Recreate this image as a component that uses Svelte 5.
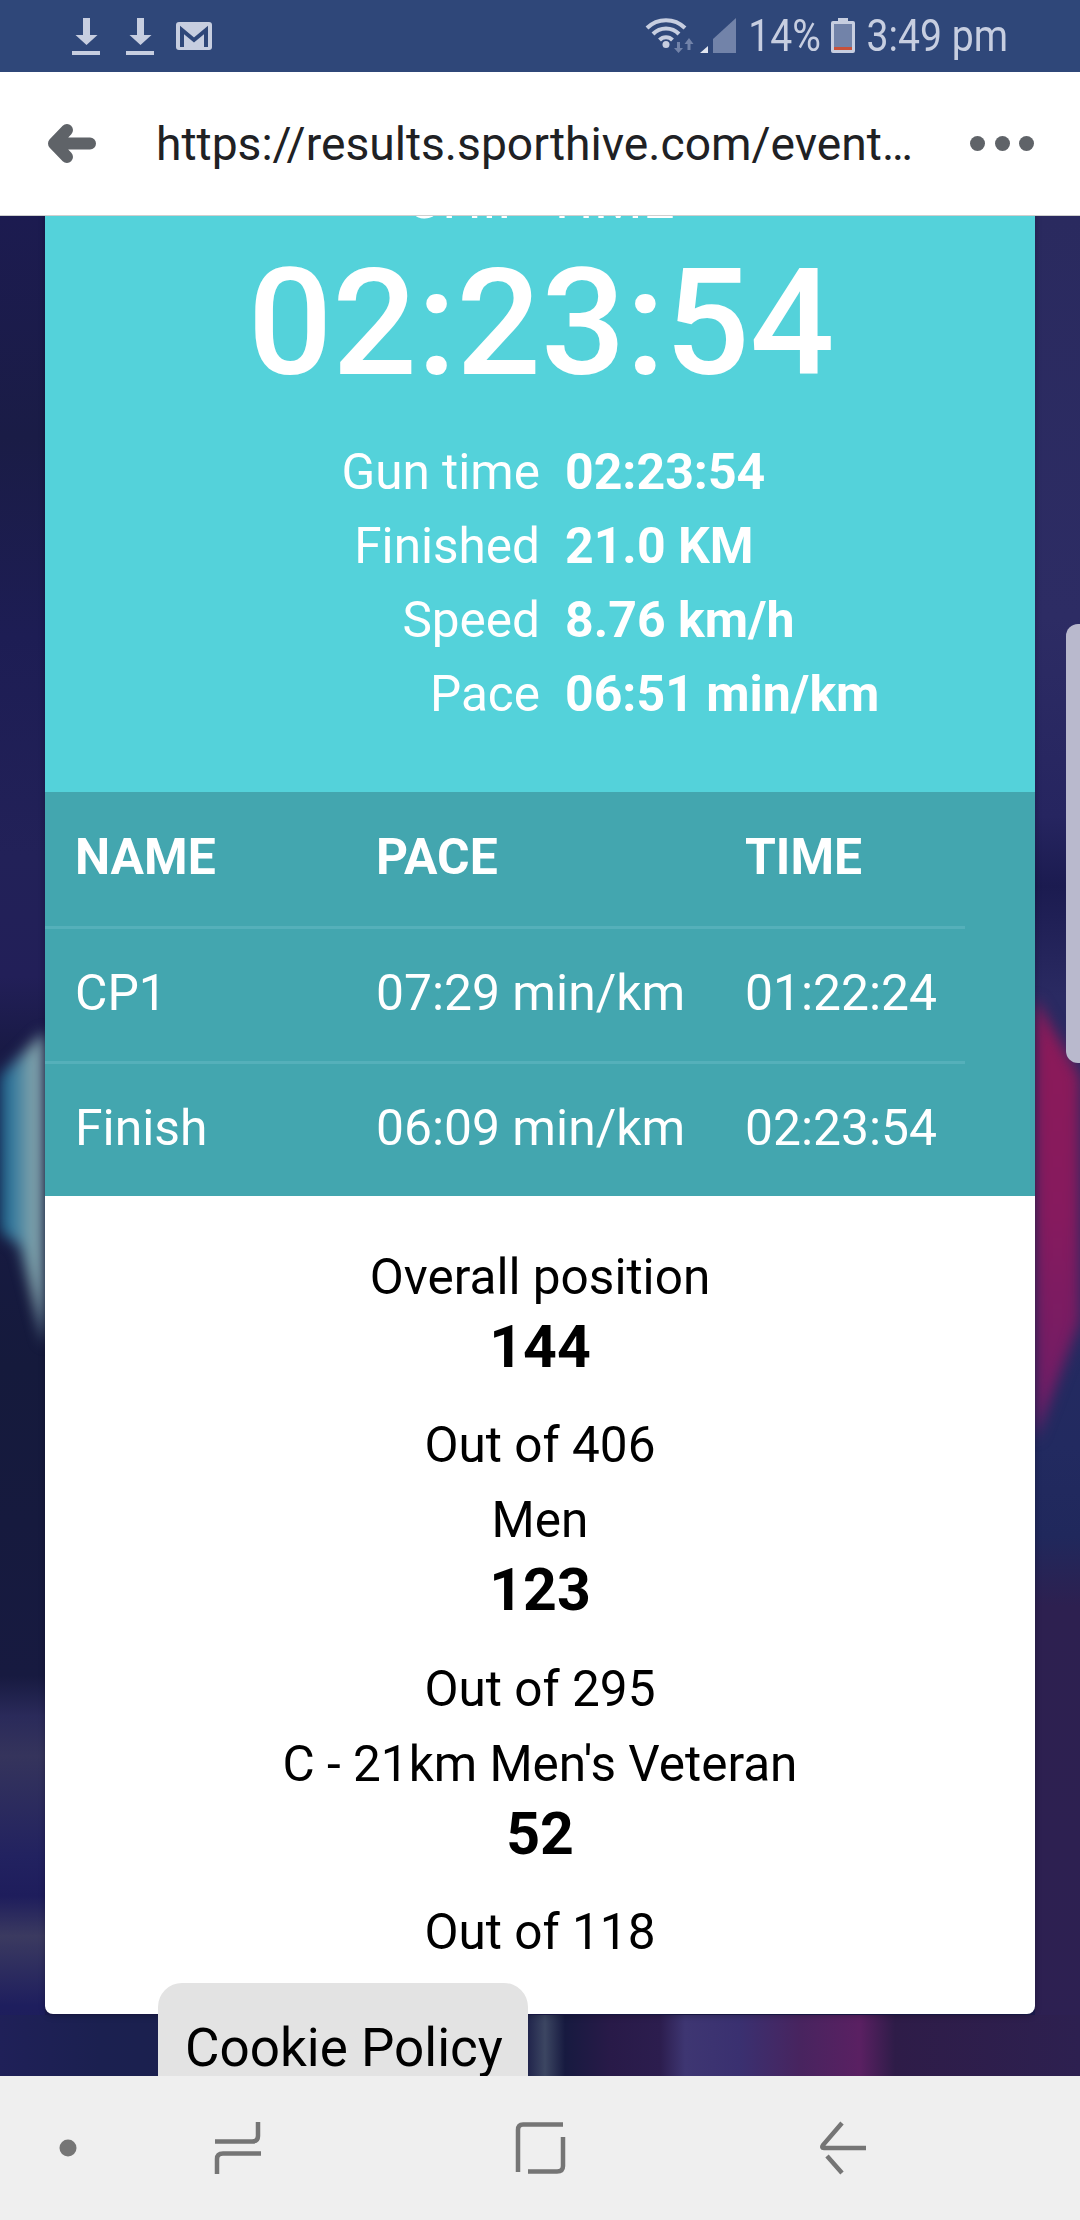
<script lang="ts">
  const stats = [
    { label: "Gun time", value: "02:23:54" },
    { label: "Finished", value: "21.0 KM" },
    { label: "Speed", value: "8.76 km/h" },
    { label: "Pace", value: "06:51 min/km" }
  ];
  const splits = [
    { name: "CP1", pace: "07:29 min/km", time: "01:22:24" },
    { name: "Finish", pace: "06:09 min/km", time: "02:23:54" }
  ];
  const positions = [
    { label: "Overall position", rank: 144, total: 406 },
    { label: "Men", rank: 123, total: 295 },
    { label: "C - 21km Men's Veteran", rank: 52, total: 118 }
  ];
</script>

<div class="phone">
  <div class="statusbar">
    <svg class="left-icons" width="140" height="72" viewBox="72 0 140 72">
      <path class="fill" d="M83 18h7v17h7.500l-11 10-11-10H83z" />
      <rect class="fill" x="72" y="51" width="28" height="4" />
      <path class="fill" d="M137 18h7v17h7.500l-11 10-11-10H137z" />
      <rect class="fill" x="126" y="51" width="28" height="4" />
      <rect class="fill" x="176" y="22" width="36" height="28" rx="3" />
      <path class="mail-m" d="M182 47V30l12 10 12-10v17" />
    </svg>
    <div class="right-icons">
      <svg width="92" height="72" viewBox="644 0 92 72">
        <path class="wifi" d="M646 28a27 27 0 0 1 38 0M652 34a18 18 0 0 1 26 0M658.500 40a9 9 0 0 1 13 0" />
        <circle class="fill" cx="665" cy="44.500" r="3.500" />
        <path class="dim" d="M676 42h3v6h3l-4.500 5-4.500-5h3zM686.500 50h3v-6h3l-4.500-6-4.500 6h3z" />
        <path class="bright" d="M699 53l8-7v7z" />
        <path class="dim" d="M712 53V39l23-21v35z" />
      </svg>
      <span class="status-text pct"><span>14%</span></span>
      <svg class="battery" width="24" height="35" viewBox="0 0 24 35">
        <path class="fill" d="M7 0h10v3h5a2 2 0 0 1 2 2v28a2 2 0 0 1-2 2H2a2 2 0 0 1-2-2V5a2 2 0 0 1 2-2h5z" />
        <rect class="dim" x="3" y="6" width="18" height="26" />
        <rect x="3" y="29" width="18" height="3" fill="#c8513a" />
      </svg>
      <span class="status-text clock"><span>3:49 pm</span></span>
    </div>
  </div>

  <header class="urlbar">
    <svg class="back" width="48" height="40" viewBox="48 125 48 40">
      <path d="M67 131L54 144.500 67 158M54 144.500H90" />
    </svg>
    <div class="url">https://results.sporthive.com/event…</div>
    <div class="dots">
      <span></span>
      <span></span>
      <span></span>
    </div>
  </header>

  <main class="content">
    <div class="backdrop">
      <div class="strip strip-left">
        <div class="blur"><div class="glow-teal"></div></div>
      </div>
      <div class="strip strip-right">
        <div class="blur"><div class="glow-magenta"></div></div>
      </div>
      <div class="strip-bottom"></div>
      <div class="scroll-handle"></div>
    </div>

    <section class="card">
      <div class="hero">
        <div class="hero-label">CHIP TIME</div>
        <div class="hero-time">02:23:54</div>
        <dl class="stats">
          {#each stats as s}
            <dt>{s.label}</dt>
            <dd>{s.value}</dd>
          {/each}
        </dl>
      </div>

      <div class="splits">
        <div class="row head">
          <div>NAME</div>
          <div>PACE</div>
          <div>TIME</div>
        </div>
        {#each splits as r}
          <div class="row">
            <div>{r.name}</div>
            <div>{r.pace}</div>
            <div>{r.time}</div>
          </div>
        {/each}
      </div>

      <div class="positions">
        {#each positions as p}
          <div class="position">
            <div class="line">{p.label}</div>
            <div class="rank">{p.rank}</div>
            <div class="line">Out of {p.total}</div>
          </div>
        {/each}
      </div>
    </section>

    <div class="cookie">Cookie Policy</div>
  </main>

  <nav class="navbar">
    <svg width="1080" height="144" viewBox="0 2076 1080 144">
      <circle cx="68" cy="2148" r="8.500" class="nav-dot" />
      <path d="M258 2122v14q0 5.500-6 5.500h-37M261 2153.500h-38q-6 0-6 5.500v15" />
      <path d="M563 2124.500h-40q-5 0-5 5.500v42M563 2137v29q0 5.500-6 5.500h-29" />
      <path d="M842 2123l-19 22q-2 3 1 3h42M827 2156l15 17" />
    </svg>
  </nav>
</div>

<style>
  :global(body) {
    margin: 0;
    font-family: Roboto, "Liberation Sans", sans-serif;
  }

  .phone {
    width: 1080px;
    height: 2220px;
    display: flex;
    flex-direction: column;
    overflow: hidden;
    background: #1b1b50;
  }

  .statusbar {
    height: 72px;
    flex: none;
    display: flex;
    align-items: center;
    justify-content: space-between;
    padding: 0 72px 0 72px;
    background: #2f4779;
  }

  .fill { fill: #c7cee0; }
  .dim { fill: #7283a9; }
  .bright { fill: #e2e6f0; }

  .mail-m {
    fill: none;
    stroke: #2f4779;
    stroke-width: 4;
  }

  .wifi {
    fill: none;
    stroke: #c7cee0;
    stroke-width: 4;
  }

  .right-icons {
    display: flex;
    align-items: center;
  }

  .status-text {
    display: flex;
    justify-content: flex-end;
    color: #c7cee0;
    font-size: 44px;
    line-height: 72px;
    white-space: nowrap;
    transform: scaleX(0.89);
    transform-origin: right center;
  }

  .pct {
    width: 68px;
    margin-left: 16px;
  }

  .battery {
    margin: 0 14px 0 10px;
    position: relative;
    top: -0.500px;
  }

  .clock { width: 139px; }

  .urlbar {
    height: 143px;
    flex: none;
    display: flex;
    align-items: center;
    background: #fff;
    border-bottom: 1px solid #cfcfcf;
    padding: 0 46px 0 48px;
  }

  .back { flex: none; }

  .back path {
    fill: none;
    stroke: #5f6368;
    stroke-width: 12;
    stroke-linecap: round;
    stroke-linejoin: round;
  }

  .url {
    flex: 1;
    margin-left: 60px;
    color: #202124;
    font-size: 46.200px;
    white-space: nowrap;
  }

  .dots {
    display: flex;
    gap: 9.500px;
  }

  .dots span {
    width: 15px;
    height: 15px;
    border-radius: 50%;
    background: #5f6368;
  }

  .content {
    flex: 1;
    position: relative;
    overflow: hidden;
  }

  .backdrop {
    position: absolute;
    inset: 0;
    overflow: hidden;
  }

  .strip {
    position: absolute;
    top: 0;
    bottom: 0;
    width: 45px;
    overflow: hidden;
  }

  .blur {
    position: absolute;
    inset: 0;
    filter: blur(7px);
  }

  .strip-left {
    left: 0;
    background: linear-gradient(180deg,
      #1c1b50 0, #1a1c46 220px, #1d1d54 420px, #222158 640px, #221f58 760px,
      #191a46 830px, #151a3c 1150px, #171a40 1460px, #2a2a5a 1500px,
      #35345c 1540px, #222260 1640px, #1e1d5c 1680px, #3b3a60 1720px,
      #1e1e5e 1790px, #1c1d50 1860px);
  }

  .glow-teal {
    position: absolute;
    inset: 0;
    background: linear-gradient(90deg, #17658f 0, #3f7fa0 15px, #8aa8ac 36px, #6e93a8 45px);
    clip-path: polygon(0 860px, 45px 815px, 60px 815px, 60px 1140px, 45px 1130px, 20px 1030px, 0 1015px);
  }

  .strip-right {
    right: 0;
    background: linear-gradient(180deg,
      #2a2a5f 0, #2d2c64 400px, #262560 600px, #1b1b50 670px, #2a2a62 780px,
      #222a60 1230px, #20285c 1320px, #2d2050 1390px, #2d2052 1860px);
  }

  .glow-magenta {
    position: absolute;
    inset: 0;
    background: linear-gradient(180deg, #8c1a58 780px, #861a5e 1000px, #6f1d66 1200px);
    clip-path: polygon(0 782px, 45px 860px, 45px 1105px, 0 1225px);
  }

  .strip-bottom {
    position: absolute;
    left: 0;
    right: 0;
    bottom: 0;
    height: 61px;
    background: linear-gradient(90deg,
      #1f2058 0, #1b2050 100px, #1b2048 420px, #1c1f48 525px, #3c4662 545px,
      #171a40 565px, #281a48 610px, #2c1d4e 660px, #3e3672 685px, #3a3070 740px,
      #48245f 800px, #5a2062 860px, #2e1c48 895px, #2d2050 1080px);
  }

  .scroll-handle {
    position: absolute;
    right: 0;
    top: 408px;
    width: 14px;
    height: 439px;
    background: #b9b9cd;
    border-radius: 12px 0 0 12px;
  }

  .card {
    position: relative;
    margin: -54px 45px 0;
    background: #fff;
    border-radius: 0 0 8px 8px;
    box-shadow: 0 2px 6px rgba(0, 0, 0, 0.25);
    overflow: hidden;
  }

  .hero {
    background: #54d2da;
    color: #fff;
    text-align: center;
    padding-bottom: 61px;
  }

  .hero-label {
    font-size: 56px;
    line-height: 74px;
  }

  .hero-time {
    margin-top: 7px;
    padding-left: 2px;
    font-size: 149px;
    line-height: 160px;
    font-weight: 500;
  }

  .stats {
    margin: 32px 0 0;
    display: grid;
    grid-template-columns: 495px 1fr;
    column-gap: 25px;
    font-size: 49.500px;
    line-height: 74px;
    text-align: left;
  }

  .stats dt {
    text-align: right;
  }

  .stats dd {
    margin: 0;
    font-size: 50px;
    font-weight: 700;
  }

  .splits {
    background: #43a6af;
    color: #fff;
    font-size: 49.800px;
  }

  .row {
    box-sizing: border-box;
    width: 920px;
    height: 135px;
    padding-bottom: 5px;
    display: grid;
    grid-template-columns: 300px 369px 251px;
    align-items: center;
    border-top: 3px solid #55b0ba;
    white-space: nowrap;
  }

  .row.head {
    height: 134px;
    border-top: 0;
    font-weight: 700;
  }

  .row > div {
    padding-left: 31px;
  }

  .row > div:first-child {
    padding-left: 30px;
  }

  .positions {
    padding: 43.500px 0 44px;
    text-align: center;
    color: #000;
    font-size: 49.500px;
  }

  .position {
    margin-bottom: 1px;
  }

  .line {
    line-height: 74px;
  }

  .rank {
    font-size: 59px;
    font-weight: 700;
    line-height: 66px;
    margin-bottom: 28.500px;
  }

  .cookie {
    position: absolute;
    left: 158px;
    top: 1767px;
    width: 370px;
    height: 120px;
    box-sizing: border-box;
    padding: 28px 0 0 27px;
    background: #e3e3e3;
    border-radius: 24px 24px 0 0;
    color: #000;
    font-size: 53px;
    line-height: 74px;
    white-space: nowrap;
  }

  .navbar {
    height: 144px;
    flex: none;
    background: #efefef;
  }

  .navbar svg {
    display: block;
  }

  .navbar path {
    fill: none;
    stroke: #757575;
    stroke-width: 4.500;
  }

  .nav-dot {
    fill: #757575;
  }
</style>
